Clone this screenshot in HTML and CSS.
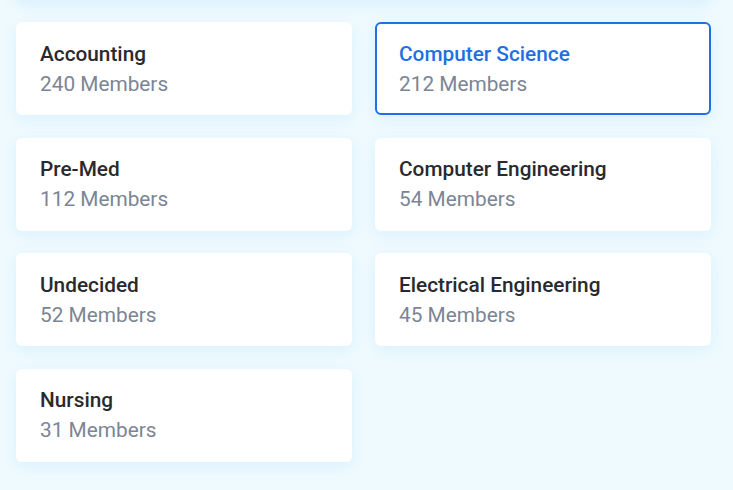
FILE: index.html
```html
<!DOCTYPE html>
<html>
<head>
<meta charset="utf-8">
<link rel="stylesheet" href="styles.css">
</head>
<body>
<div class="page">
  <div class="top-card"></div>
  <div class="grid">
    <div class="card"><div class="title">Accounting</div><div class="sub">240 Members</div></div>
    <div class="card selected"><div class="title">Computer Science</div><div class="sub">212 Members</div></div>
    <div class="card"><div class="title">Pre-Med</div><div class="sub">112 Members</div></div>
    <div class="card"><div class="title">Computer Engineering</div><div class="sub">54 Members</div></div>
    <div class="card"><div class="title">Undecided</div><div class="sub">52 Members</div></div>
    <div class="card"><div class="title">Electrical Engineering</div><div class="sub">45 Members</div></div>
    <div class="card"><div class="title">Nursing</div><div class="sub">31 Members</div></div>
  </div>
</div>
</body>
</html>
```
FILE: styles.css
```css
html, body { margin: 0; padding: 0; }
body {
  background: #effaff;
  font-family: Roboto, "Liberation Sans", sans-serif;
  width: 733px;
  height: 490px;
  overflow: hidden;
}
.page { padding: 0 22px 0 16px; }
.top-card {
  height: 40px;
  margin-top: -40px;
  background: #fff;
  border-radius: 6px;
  box-shadow: 0 4px 16px rgba(40, 160, 230, 0.12);
}
.grid {
  margin-top: 22px;
  display: grid;
  grid-template-columns: 336px 336px;
  column-gap: 23px;
  row-gap: 22.67px;
}
.card {
  box-sizing: border-box;
  height: 93px;
  background: #fff;
  border-radius: 6px;
  padding: 16.5px 24px 16.5px;
  box-shadow: 0 4px 16px rgba(40, 160, 230, 0.10);
}
.card.selected {
  border: 2px solid #1f6fe5;
  padding: 14.5px 22px 14.5px;
}
.title {
  font-size: 20.8px;
  font-weight: 500;
  line-height: 30px;
  color: #2a2a2e;
}
.selected .title { color: #1f6fe5; }
.sub {
  font-size: 20.8px;
  line-height: 30px;
  color: #7c8594;
}
```
